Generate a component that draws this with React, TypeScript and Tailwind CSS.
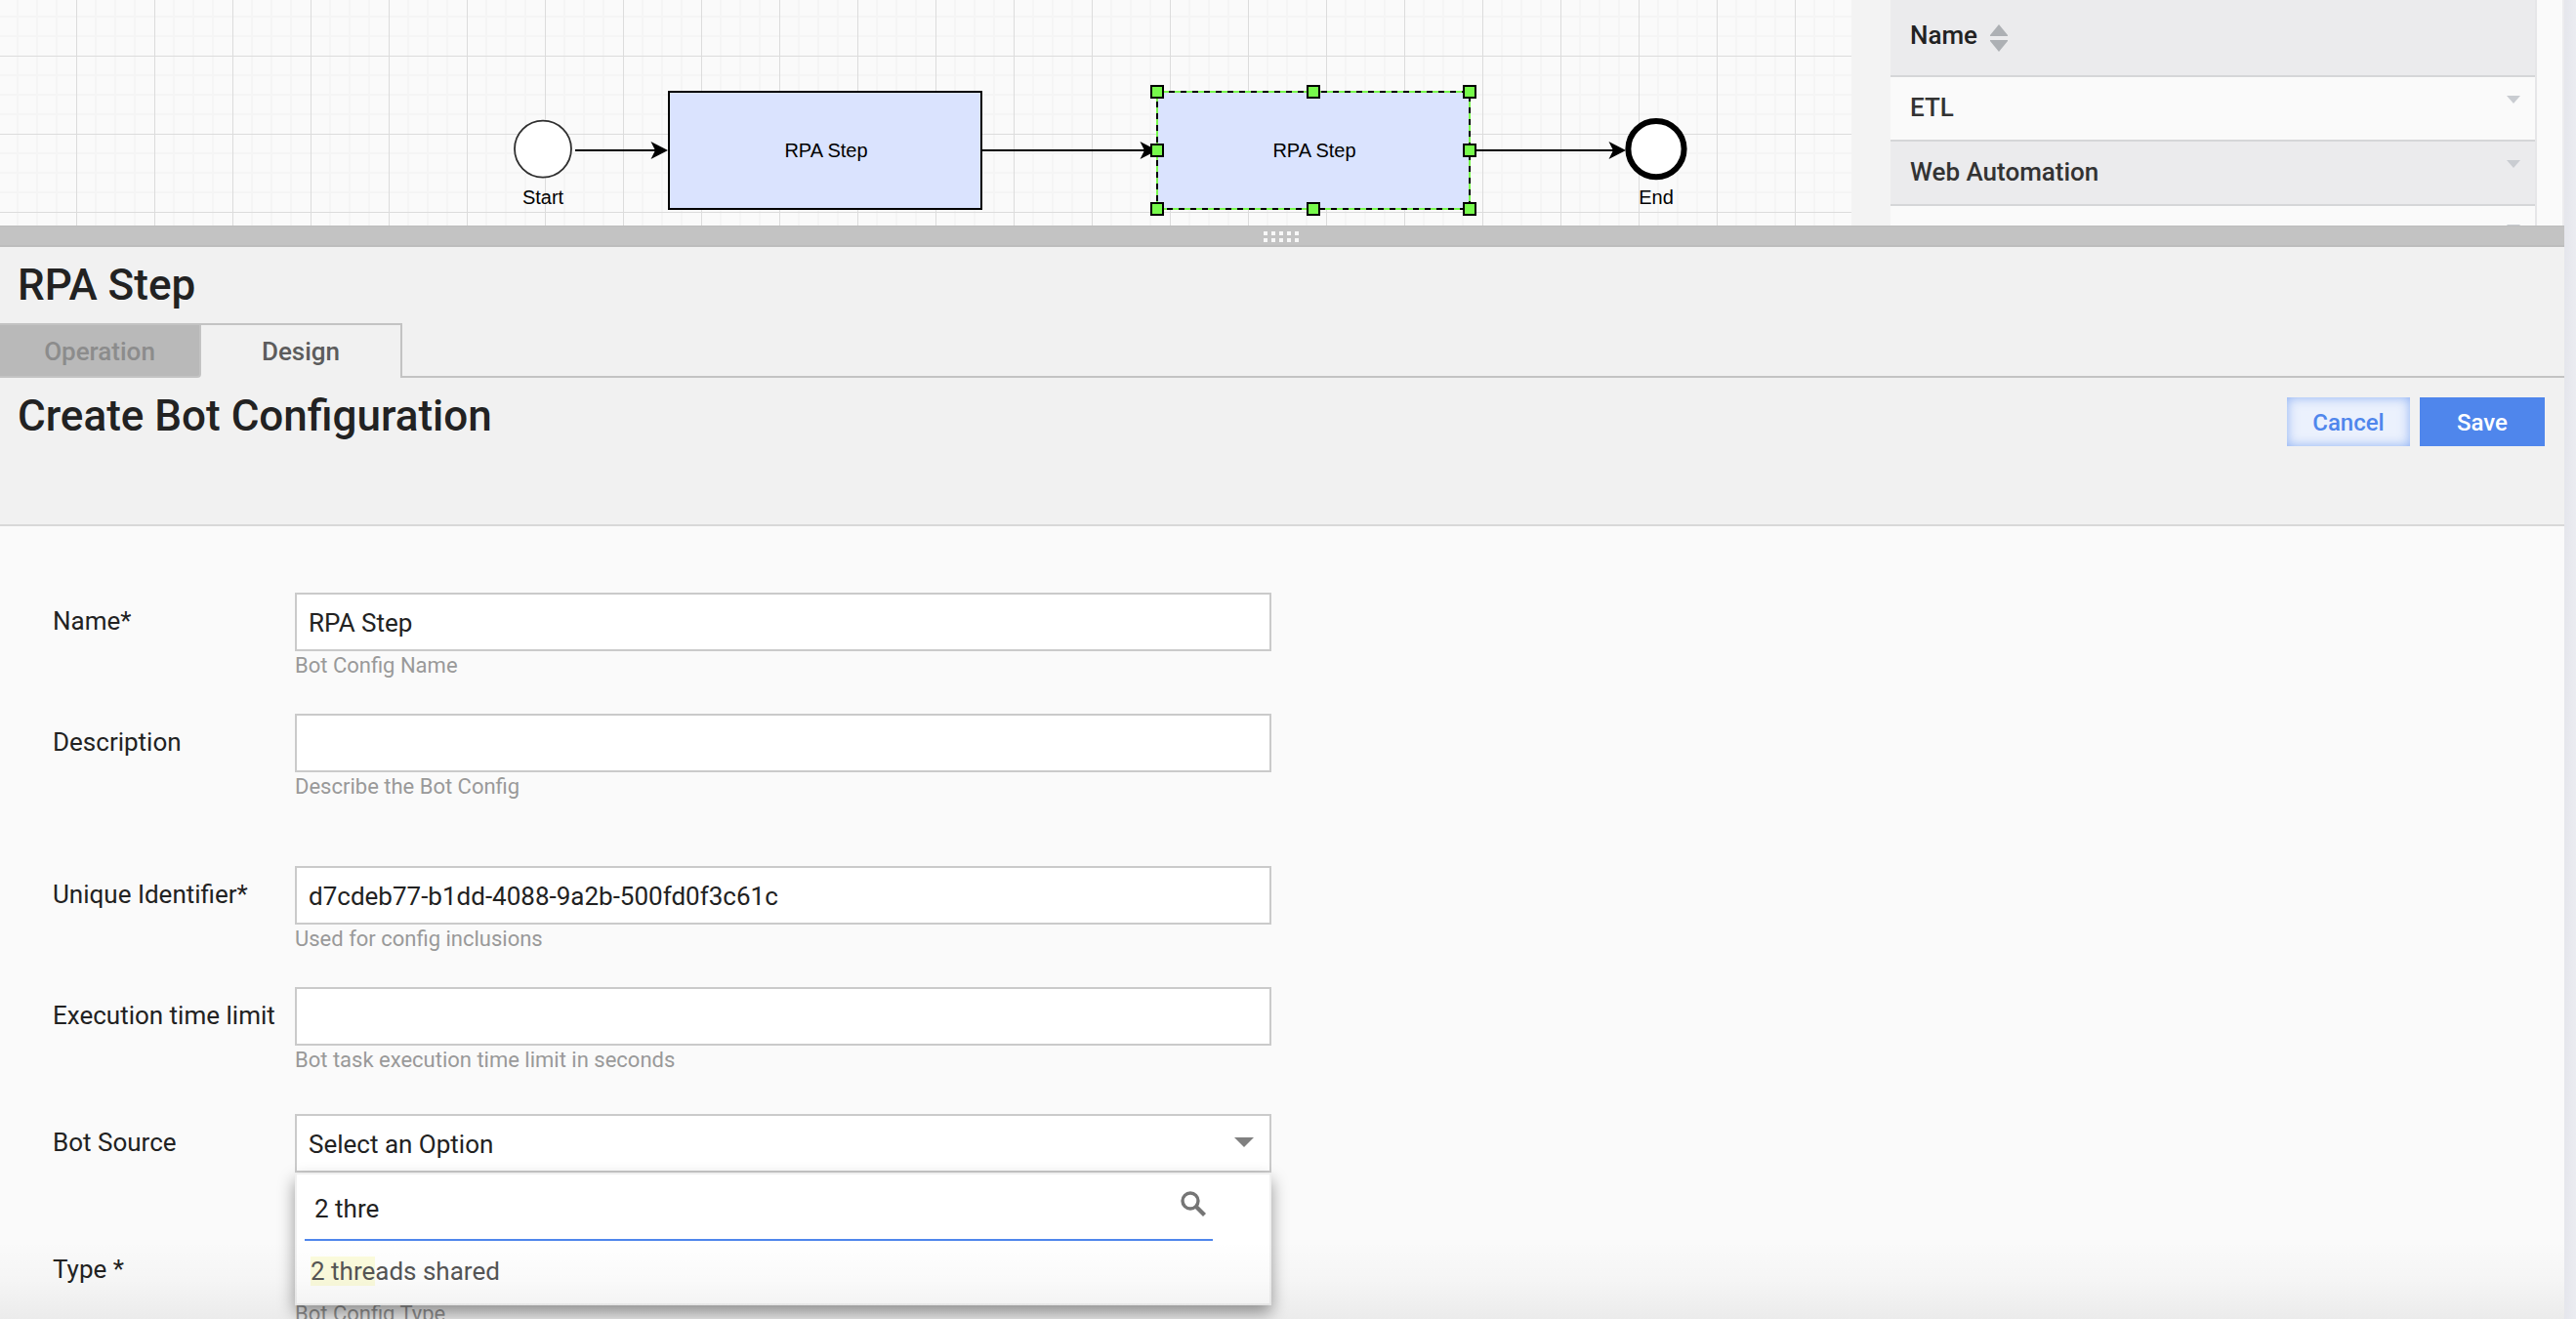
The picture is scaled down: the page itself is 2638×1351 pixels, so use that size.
import React from "react";

const GRID = 80;

function Arrow({ x1, x2 }: { x1: number; x2: number }) {
  return (
    <g>
      <line x1={x1} y1={154} x2={x2 - 10} y2={154} stroke="#000" strokeWidth={2} />
      <path d={`M${x2} 154 L${x2 - 17.5} 163 L${x2 - 13} 154 L${x2 - 17.5} 145 Z`} fill="#000" />
    </g>
  );
}

function Canvas() {
  const handles = [
    [1185, 94], [1345, 94], [1505, 94],
    [1185, 154], [1505, 154],
    [1185, 214], [1345, 214], [1505, 214],
  ];
  const minor = [18, 38, 58];
  return (
    <svg width={1896} height={231} className="block shrink-0 bg-[#fafafa]" fontFamily="'Liberation Sans', Arial, sans-serif" fontSize={20}>
      <defs>
        <pattern id="grid" width={GRID} height={GRID} patternUnits="userSpaceOnUse" y={-21}>
          {minor.map((m) => (
            <g key={m} stroke="#f5f5f5" strokeWidth={2}>
              <line x1={m} y1={0} x2={m} y2={80} />
              <line x1={0} y1={m} x2={80} y2={m} />
            </g>
          ))}
          <rect x={78} y={0} width={1} height={80} fill="#dcdcdc" />
          <rect x={0} y={78} width={80} height={1} fill="#dcdcdc" />
        </pattern>
      </defs>
      <rect width={1896} height={231} fill="url(#grid)" />
      <circle cx={556} cy={152.6} r={29} fill="#fff" stroke="#2f2f2f" strokeWidth={1.8} />
      <Arrow x1={589} x2={684} />
      <rect x={685} y={94} width={320} height={120} fill="#dae3fe" stroke="#000" strokeWidth={2} />
      <Arrow x1={1006} x2={1185} />
      <rect x={1185} y={94} width={320} height={120} fill="#dae3fe" stroke="#77fa4c" strokeWidth={2} />
      <rect x={1185} y={94} width={320} height={120} fill="none" stroke="#000" strokeWidth={2} strokeDasharray="6 6" />
      <Arrow x1={1505} x2={1665} />
      {handles.map(([x, y]) => (
        <rect key={`${x}-${y}`} x={x - 6} y={y - 6} width={12} height={12} fill="#77fa4c" stroke="#000" strokeWidth={2} />
      ))}
      <circle cx={1696} cy={152.6} r={28.6} fill="#fff" stroke="#000" strokeWidth={6} />
      <g textAnchor="middle" fill="#000">
        <text x={846} y={161}>RPA Step</text>
        <text x={1346} y={161}>RPA Step</text>
        <text x={556} y={208.5}>Start</text>
        <text x={1696} y={208.5}>End</text>
      </g>
    </svg>
  );
}

function TableRow({ name, shaded }: { name: string; shaded?: boolean }) {
  return (
    <div className={`flex h-[66px] shrink-0 items-start justify-between border-b-2 border-[#d5d6d8] pl-5 pr-[15px] ${shaded ? "bg-[#ebebed]" : "bg-[#fafafa]"}`}>
      <span className="text-[26px] font-medium leading-[62px] text-[#333]">{name}</span>
      <svg width={14} height={8} className="mt-[19px]"><path d="M0 0H14L7 8Z" fill="#c9ccd1" /></svg>
    </div>
  );
}

function Library() {
  return (
    <div className="flex min-w-0 flex-1 bg-[#f3f3f3] pl-10">
      <div className="flex w-[662px] shrink-0 flex-col overflow-hidden border-r-2 border-[#e6e6e8] bg-[#fafafa]">
        <div className="flex h-[79px] shrink-0 items-start border-b-2 border-[#d5d6d8] bg-[#ebebed] pl-5">
          <span className="text-[26px] font-medium leading-[72px] text-[#222]">Name</span>
          <svg width={18} height={28} className="ml-[13px] mt-[25px]">
            <path d="M9 0L18 11V12H0V11Z" fill="#adb0b4" />
            <path d="M9 28L18 17V16H0V17Z" fill="#adb0b4" />
          </svg>
        </div>
        <TableRow name="ETL" />
        <TableRow name="Web Automation" shaded />
        <TableRow name="" />
      </div>
      <div className="flex-1 border-r-2 border-[#ececee] bg-[#fafafa]" />
    </div>
  );
}

function Field({ label, value, help, className = "", children }: {
  label: string; value?: string; help?: string; className?: string; children?: React.ReactNode;
}) {
  return (
    <div className={`flex shrink-0 items-start pl-[54px] ${className}`}>
      <div className="w-[248px] shrink-0 text-[26px] leading-[58px] text-[#222]">{label}</div>
      <div className="relative w-[1000px]">
        <div className="flex h-[60px] items-center justify-between border-2 border-[#cacaca] bg-white pl-3 pr-4 pt-[2px] text-[26px] text-[#222]">
          <span>{value}</span>
          {children}
        </div>
        <div className="text-[22px] leading-[30px] text-[#999]">{help}</div>
      </div>
    </div>
  );
}

function SourceMenu() {
  return (
    <div className="absolute left-[302px] top-[662px] z-10 h-[136px] w-[1000px] border-2 border-[#f0f0f0] bg-white pl-2 shadow-[0_8px_16px_rgba(0,0,0,0.4)]">
      <div className="flex h-[68px] w-[930px] items-start justify-between border-b-2 border-[#4f86ec] pl-[10px] pr-[7px]">
        <span className="text-[26px] leading-[70px] text-[#222]">2 thre</span>
        <svg width={26} height={26} viewBox="0 0 26 26" className="mt-[17px]" fill="none" stroke="#757575">
          <circle cx={10} cy={10} r={8} strokeWidth={3.4} />
          <path d="M15.5 15.5L24.5 24.5" strokeWidth={4.2} />
        </svg>
      </div>
      <div className="pl-[6px] pt-4 text-[26px] leading-[30px] text-[#555]">
        <span className="inline-block bg-[#fcfcdd]">2 thre</span>ads shared
      </div>
    </div>
  );
}

export default function App() {
  return (
    <div className="flex h-[1351px] w-[2638px] overflow-hidden bg-[#ebecf1] font-[Roboto,sans-serif]">
      <div className="flex w-[2626px] shrink-0 flex-col">
        <div className="flex h-[231px] shrink-0 overflow-hidden">
          <Canvas />
          <Library />
        </div>
        <div className="flex h-[22px] shrink-0 items-start justify-center border-b-2 border-t border-[#bdbdbd] bg-[#c3c3c3] pt-[5px]">
          <div className="mr-[2px] grid grid-cols-5 gap-x-1 gap-y-[3px]">
            {Array.from({ length: 10 }, (_, i) => <div key={i} className="size-1 bg-[#f8f8f8]" />)}
          </div>
        </div>
        <div className="h-[286px] shrink-0 border-b-2 border-[#d8d8d8] bg-[#f1f1f1]">
          <h1 className="h-[78px] pl-[18px] text-[44px] font-medium leading-[78px] text-[#222]">RPA Step</h1>
          <div className="flex h-14 text-[26px] font-medium leading-[54px]">
            <div className="w-[206px] rounded-br-sm border-2 border-l-0 border-[#c3c3c3] bg-[#b9b9b9] text-center text-[#8c8c8c]">Operation</div>
            <div className="w-[206px] border-r-2 border-t-2 border-[#c3c3c3] text-center text-[#5c5c5c]">Design</div>
            <div className="flex-1 border-b-2 border-[#c3c3c3]" />
          </div>
          <div className="flex items-start justify-between pl-[18px] pr-5 pt-5">
            <h2 className="-mt-1 text-[44px] font-medium leading-[46px] text-[#222]">Create Bot Configuration</h2>
            <div className="flex gap-[10px] text-[24px] font-medium leading-[50px]">
              <button className="h-[50px] w-[126px] bg-[#ebf1fd] pt-px text-[#4f86ec] shadow-[inset_0_0_12px_rgba(79,134,236,0.6)]">Cancel</button>
              <button className="h-[50px] w-[128px] bg-[#4f86ec] pt-px text-white">Save</button>
            </div>
          </div>
        </div>
        <div className="relative flex min-h-0 flex-1 flex-col overflow-hidden bg-[#fafafa] pt-[68px]">
          <Field label="Name*" value="RPA Step" help="Bot Config Name" className="h-[124px]" />
          <Field label="Description" help="Describe the Bot Config" className="h-[156px]" />
          <Field label="Unique Identifier*" value="d7cdeb77-b1dd-4088-9a2b-500fd0f3c61c" help="Used for config inclusions" className="h-[124px]" />
          <Field label="Execution time limit" help="Bot task execution time limit in seconds" className="h-[130px]" />
          <Field label="Bot Source" value="Select an Option" className="h-[130px]">
            <svg width={20} height={10} className="-mt-[5px]"><path d="M0 0H20L10 10Z" fill="#808080" /></svg>
          </Field>
          <Field label="Type *" help="Bot Config Type" className="h-[130px]" />
          <SourceMenu />
          <div className="pointer-events-none absolute bottom-0 left-0 z-20 h-20 w-full bg-linear-to-b from-transparent via-black/2 to-black/6" />
        </div>
      </div>
      <div className="flex-1 bg-linear-to-r from-[#e5e6ec] to-[#ebecf1]" />
    </div>
  );
}
